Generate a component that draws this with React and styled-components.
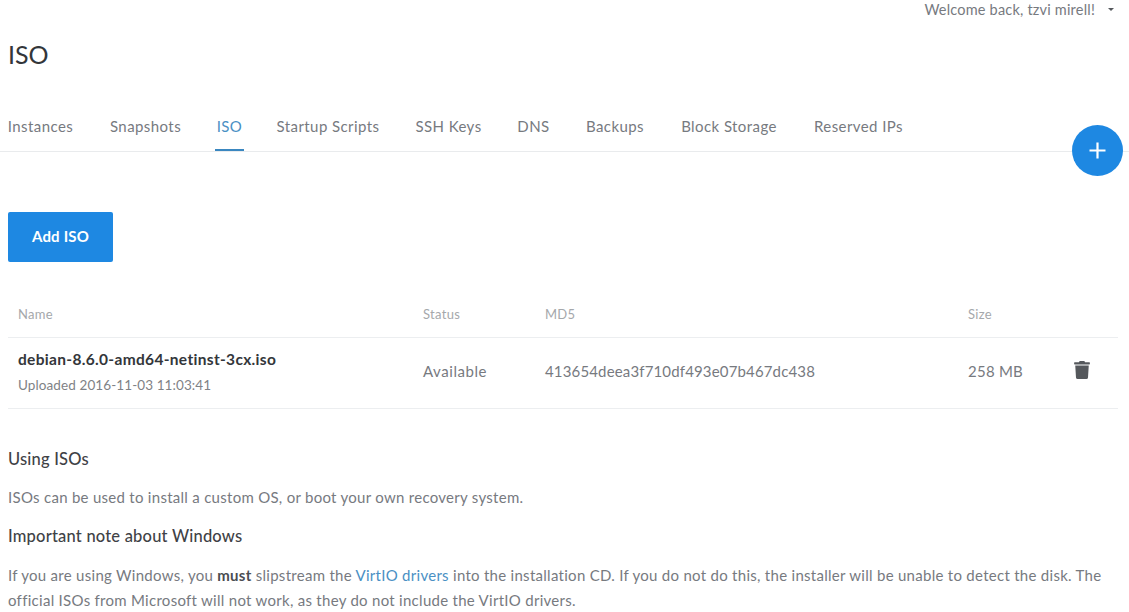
import styled, { createGlobalStyle } from 'styled-components';
import { FaTrash } from 'react-icons/fa';

const GlobalStyle = createGlobalStyle`
  html, body {
    margin: 0;
    padding: 0;
    background: #fff;
    overflow: hidden;
  }
  body {
    font-family: "Lato", "Open Sans", sans-serif;
    font-size: 15px;
    color: #5f6368;
  }
`;

const Page = styled.div`
  position: relative;
  width: 1129px;
  height: 612px;
  overflow: hidden;
`;

const TopBar = styled.div`
  display: flex;
  justify-content: flex-end;
  align-items: center;
  height: 18px;
  padding-right: 15px;
  gap: 13px;
  font-size: 14.5px;
  letter-spacing: 0.2px;
  color: #777a7f;
`;

const Caret = styled.span`
  width: 0;
  height: 0;
  border-left: 3.5px solid transparent;
  border-right: 3.5px solid transparent;
  border-top: 3.5px solid #55585c;
`;

const Title = styled.h1`
  margin: 19px 0 0 8px;
  height: 34px;
  font-size: 25px;
  line-height: 34px;
  font-weight: 400;
  color: #33363a;
`;

const Tabs = styled.nav`
  display: flex;
  height: 48px;
  margin-top: 32px;
  padding-left: 5px;
  gap: 30px;
  border-bottom: 1px solid #e9ebed;
`;

const Tab = styled.a`
  box-sizing: border-box;
  display: flex;
  justify-content: center;
  width: ${(p) => p.$width}px;
  height: 48px;
  line-height: 46px;
  font-size: 15px;
  letter-spacing: 0.42px;
  white-space: nowrap;
  color: ${(p) => (p.$active ? '#4a90c4' : '#777a7f')};
  border-bottom: 2px solid ${(p) => (p.$active ? '#3a87c0' : 'transparent')};
`;

const Content = styled.main`
  padding: 60px 11px 0 8px;
`;

const AddButton = styled.button`
  display: block;
  width: 105px;
  height: 50px;
  padding: 0 0 2px;
  border: 0;
  border-radius: 2px;
  background: #1e88e2;
  color: #fff;
  font: 700 15px "Lato", sans-serif;
  letter-spacing: 0.2px;
`;

const Table = styled.section`
  margin-top: 27px;
`;

const Row = styled.div`
  box-sizing: border-box;
  display: grid;
  grid-template-columns: 405px 122px 423px 100px 1fr;
  align-items: center;
  padding-left: 10px;
  padding-top: ${(p) => (p.$head ? '2px' : '0')};
  padding-bottom: ${(p) => (p.$head ? '0' : '5px')};
  height: ${(p) => (p.$head ? '49px' : '71px')};
  border-bottom: 1px solid #eceef0;
`;

const HeadCell = styled.div`
  font-size: 13px;
  letter-spacing: 0.3px;
  color: #a5a8ab;
`;

const Cell = styled.div`
  font-size: 15px;
  letter-spacing: ${(p) => p.$spacing || '0.25px'};
  color: #777a7f;
`;

const NameCell = styled.div`
  padding-top: 2px;
`;

const FileName = styled.div`
  font-size: 15.5px;
  font-weight: 700;
  letter-spacing: 0.32px;
  line-height: 20px;
  color: #33363a;
`;

const Uploaded = styled.div`
  margin-top: 7px;
  font-size: 13.5px;
  letter-spacing: 0.1px;
  line-height: 18px;
  color: #7f8286;
`;

const TrashButton = styled.span`
  display: flex;
  margin-left: 5px;
  margin-bottom: 2px;
  font-size: 18px;
  color: #55585c;
`;

const Notes = styled.section`
  margin-top: 40px;
`;

const NoteTitle = styled.h4`
  margin: 0 0 ${(p) => p.$after || '15px'};
  font-size: 16.5px;
  line-height: 21px;
  font-weight: 500;
  letter-spacing: 0.2px;
  color: #3f4246;
`;

const NoteText = styled.p`
  margin: 0 0 16px;
  font-size: 15px;
  line-height: 25px;
  letter-spacing: 0.28px;
  color: #777a7f;

  strong {
    color: #4a4d51;
  }

  a {
    color: #4a90c4;
  }
`;

const Fab = styled.button`
  position: absolute;
  left: 1072px;
  top: 125px;
  display: flex;
  align-items: center;
  justify-content: center;
  width: 51px;
  height: 51px;
  padding: 0;
  border: 0;
  border-radius: 50%;
  background: #1e88e2;
`;

const tabs = [
  { label: 'Instances', width: 71 },
  { label: 'Snapshots', width: 79 },
  { label: 'ISO', width: 29 },
  { label: 'Startup Scripts', width: 108 },
  { label: 'SSH Keys', width: 73 },
  { label: 'DNS', width: 37 },
  { label: 'Backups', width: 66 },
  { label: 'Block Storage', width: 102 },
  { label: 'Reserved IPs', width: 97 },
];

const App = () => {
  return (
    <Page>
      <GlobalStyle />
      <TopBar>
        Welcome back, tzvi mirell!
        <Caret />
      </TopBar>
      <Title>ISO</Title>
      <Tabs>
        {tabs.map((t) => (
          <Tab key={t.label} $width={t.width} $active={t.label === 'ISO'}>{t.label}</Tab>
        ))}
      </Tabs>
      <Fab aria-label="Add">
        <svg width="17" height="17" viewBox="0 0 17 17">
          <path d="M8.5 0.5v16M0.5 8.5h16" stroke="#fff" strokeWidth="2.2" />
        </svg>
      </Fab>
      <Content>
        <AddButton>Add ISO</AddButton>
        <Table>
          <Row $head>
            <HeadCell>Name</HeadCell>
            <HeadCell>Status</HeadCell>
            <HeadCell>MD5</HeadCell>
            <HeadCell>Size</HeadCell>
            <HeadCell />
          </Row>
          <Row>
            <NameCell>
              <FileName>debian-8.6.0-amd64-netinst-3cx.iso</FileName>
              <Uploaded>Uploaded 2016-11-03 11:03:41</Uploaded>
            </NameCell>
            <Cell $spacing="0.55px">Available</Cell>
            <Cell $spacing="0.15px">413654deea3f710df493e07b467dc438</Cell>
            <Cell>258 MB</Cell>
            <TrashButton><FaTrash /></TrashButton>
          </Row>
        </Table>
        <Notes>
          <NoteTitle>Using ISOs</NoteTitle>
          <NoteText>ISOs can be used to install a custom OS, or boot your own recovery system.</NoteText>
          <NoteTitle $after="16px">Important note about Windows</NoteTitle>
          <NoteText>
            If you are using Windows, you <strong>must</strong> slipstream the <a>VirtIO drivers</a> into the installation CD. If you do not do this, the installer will be unable to detect the disk. The official ISOs from Microsoft will not work, as they do not include the VirtIO drivers.
          </NoteText>
        </Notes>
      </Content>
    </Page>
  );
};

export default App;
